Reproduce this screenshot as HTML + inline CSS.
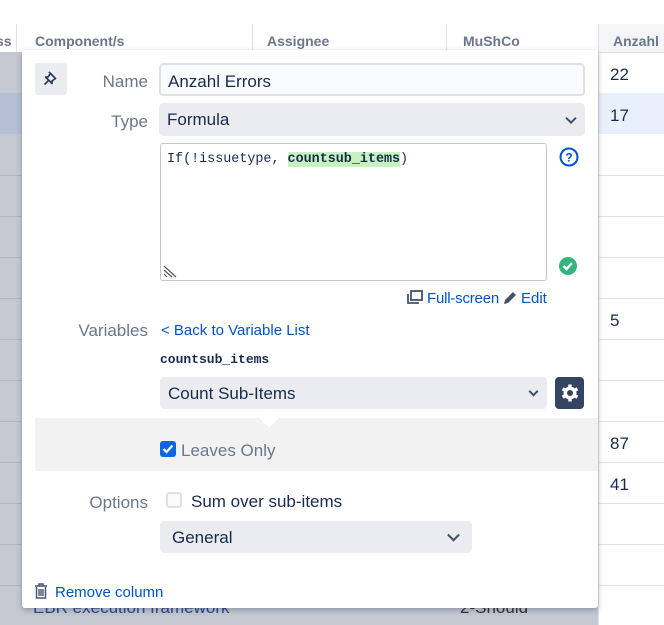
<!DOCTYPE html>
<html><head><style>
*{box-sizing:border-box;margin:0;padding:0}
body{width:664px;height:625px;overflow:hidden;background:#fff;font-family:"Liberation Sans",sans-serif;position:relative}
.a{position:absolute}
.hdr{font-weight:bold;color:#6b778c;font-size:14px;top:33px}
.lbl{color:#6b778c;font-size:17px;text-align:right;width:126px;left:22px}
.sel{background:#ebecf0;border-radius:4px;color:#172b4d;font-size:17px;padding-left:8px;padding-top:1px;display:flex;align-items:center}
.chev{position:absolute;right:10px;top:50%;width:8px;height:8px;border-right:2.5px solid #42526e;border-bottom:2.5px solid #42526e;transform:translateY(-70%) rotate(45deg)}
.link{color:#0052cc;font-size:15px}
.rowline{height:1px;background:#dfe1e6}
</style></head><body>
<div class="a" style="left:0;top:24px;width:598px;height:601px;background:#c5c8d0"></div>
<div class="a" style="left:0;top:24px;width:598px;height:28px;background:#fff"></div>
<div class="a" style="left:0;top:93px;width:22px;height:41px;background:#b4bfd4"></div>
<div class="a" style="left:598px;top:24px;width:66px;height:28px;background:#f4f5f7"></div>
<div class="a" style="left:598px;top:93px;width:66px;height:41px;background:#e9f0fb"></div>
<div class="a" style="left:598px;top:24px;width:1px;height:601px;background:#dfe1e6"></div>
<div class="a rowline" style="left:598px;top:52px;width:66px"></div>
<div class="a rowline" style="left:598px;top:175px;width:66px"></div>
<div class="a rowline" style="left:598px;top:216px;width:66px"></div>
<div class="a rowline" style="left:598px;top:257px;width:66px"></div>
<div class="a rowline" style="left:598px;top:298px;width:66px"></div>
<div class="a rowline" style="left:598px;top:339px;width:66px"></div>
<div class="a rowline" style="left:598px;top:380px;width:66px"></div>
<div class="a rowline" style="left:598px;top:421px;width:66px"></div>
<div class="a rowline" style="left:598px;top:462px;width:66px"></div>
<div class="a rowline" style="left:598px;top:503px;width:66px"></div>
<div class="a rowline" style="left:598px;top:544px;width:66px"></div>
<div class="a rowline" style="left:598px;top:585px;width:66px"></div>
<div class="a" style="left:0;top:175px;width:22px;height:1px;background:#b3b6bf"></div>
<div class="a" style="left:0;top:216px;width:22px;height:1px;background:#b3b6bf"></div>
<div class="a" style="left:0;top:257px;width:22px;height:1px;background:#b3b6bf"></div>
<div class="a" style="left:0;top:298px;width:22px;height:1px;background:#b3b6bf"></div>
<div class="a" style="left:0;top:339px;width:22px;height:1px;background:#b3b6bf"></div>
<div class="a" style="left:0;top:380px;width:22px;height:1px;background:#b3b6bf"></div>
<div class="a" style="left:0;top:421px;width:22px;height:1px;background:#b3b6bf"></div>
<div class="a" style="left:0;top:462px;width:22px;height:1px;background:#b3b6bf"></div>
<div class="a" style="left:0;top:503px;width:22px;height:1px;background:#b3b6bf"></div>
<div class="a" style="left:0;top:544px;width:22px;height:1px;background:#b3b6bf"></div>
<div class="a" style="left:0;top:585px;width:22px;height:1px;background:#b3b6bf"></div>
<div class="a" style="left:16px;top:24px;width:1px;height:28px;background:#dfe1e6"></div>
<div class="a" style="left:252px;top:24px;width:1px;height:28px;background:#dfe1e6"></div>
<div class="a" style="left:446px;top:24px;width:1px;height:28px;background:#dfe1e6"></div>
<div class="a hdr" style="left:-4px">ss</div>
<div class="a hdr" style="left:35px">Component/s</div>
<div class="a hdr" style="left:267px">Assignee</div>
<div class="a hdr" style="left:463px">MuShCo</div>
<div class="a hdr" style="left:613px">Anzahl</div>
<div class="a" style="left:610px;top:65px;font-size:17px;color:#172b4d">22</div>
<div class="a" style="left:610px;top:106px;font-size:17px;color:#172b4d">17</div>
<div class="a" style="left:610px;top:311px;font-size:17px;color:#172b4d">5</div>
<div class="a" style="left:610px;top:434px;font-size:17px;color:#172b4d">87</div>
<div class="a" style="left:610px;top:475px;font-size:17px;color:#172b4d">41</div>
<div class="a" style="left:33px;top:598px;font-size:17px;color:#2d4a8a">EBR execution framework</div>
<div class="a" style="left:460px;top:598px;font-size:17px;color:#333">2-Should</div>

<div class="a" style="left:22px;top:50px;width:576px;height:558px;background:#fff;border-radius:3px;box-shadow:0 2px 6px rgba(9,30,66,.3)"></div>
<div class="a" style="left:35px;top:63px;width:32px;height:32px;background:#ebecf0;border-radius:3px"></div>
<svg class="a" style="left:42px;top:69px" width="18" height="18" viewBox="0 0 18 18"><path d="M7 3 L14 10 M8.5 4.5 L6 8 L3.5 8 L10 14.5 L10 12 L13.5 9.5 M6.5 11.5 L2.5 15.5" fill="none" stroke="#253858" stroke-width="1.6" stroke-linejoin="round"/></svg>
<div class="a lbl" style="top:72px">Name</div>
<div class="a" style="left:159px;top:63px;width:426px;height:33px;border:2px solid #dfe1e6;border-radius:4px;background:#fafbfc;font-size:17px;color:#172b4d;padding:7px 0 0 7px">Anzahl Errors</div>
<div class="a lbl" style="top:112px">Type</div>
<div class="a sel" style="left:159px;top:103px;width:426px;height:33px">Formula<span class="chev"></span></div>
<div class="a" style="left:160px;top:143px;width:387px;height:138px;border:1px solid #c1c7d0;border-radius:3px;background:#fff"></div>
<div class="a" style="left:167px;top:152px;font-family:'Liberation Mono',monospace;font-size:13.4px;color:#172b4d">If(!issuetype, <b style="background:#c8f0c0">countsub_items</b>)</div>
<svg class="a" style="left:162px;top:262px" width="16" height="16"><path d="M2 4 L14 15 M2 8 L10 15 M2 12 L5 15" stroke="#555" stroke-width="1.2"/></svg>
<svg class="a" style="left:559px;top:147px" width="20" height="20"><circle cx="10" cy="10" r="8.5" fill="none" stroke="#0052cc" stroke-width="2"/><text x="10" y="14.5" font-size="12" font-weight="bold" text-anchor="middle" fill="#0052cc" font-family="Liberation Sans">?</text></svg>
<svg class="a" style="left:558px;top:256px" width="20" height="20"><circle cx="10" cy="10" r="9" fill="#36b37e"/><path d="M5.5 10 L8.5 13 L14 7" fill="none" stroke="#fff" stroke-width="2.4"/></svg>
<svg class="a" style="left:407px;top:290px" width="16" height="14"><rect x="4" y="1" width="11" height="9" fill="none" stroke="#42526e" stroke-width="1.8"/><path d="M1 4 V13 H12" fill="none" stroke="#42526e" stroke-width="1.8"/></svg>
<div class="a link" style="left:427px;top:290px;letter-spacing:-0.2px">Full-screen</div>
<svg class="a" style="left:502px;top:290px" width="16" height="16"><path d="M2 14 L3 10 L11 2 L14 5 L6 13 Z" fill="#42526e"/></svg>
<div class="a link" style="left:521px;top:290px">Edit</div>
<div class="a lbl" style="top:321px">Variables</div>
<div class="a link" style="left:161px;top:322px;font-size:15px">&lt; Back to Variable List</div>
<div class="a" style="left:160px;top:352px;font-family:'Liberation Mono',monospace;font-weight:bold;font-size:13px;color:#172b4d">countsub_items</div>
<div class="a sel" style="left:160px;top:377px;width:387px;height:32px">Count Sub-Items<span class="chev" style="right:10px;width:7px;height:7px"></span></div>
<div class="a" style="left:555px;top:377px;width:29px;height:32px;background:#344563;border-radius:4px"></div>
<svg class="a" style="left:560px;top:383px" width="20" height="20" viewBox="0 0 20 20"><g fill="#fff"><circle cx="10" cy="10" r="6.5"/><rect x="8.3" y="1.5" width="3.4" height="17"/><rect x="8.3" y="1.5" width="3.4" height="17" transform="rotate(60 10 10)"/><rect x="8.3" y="1.5" width="3.4" height="17" transform="rotate(120 10 10)"/></g><circle cx="10" cy="10" r="3" fill="#344563"/></svg>
<div class="a" style="left:35px;top:418px;width:563px;height:53px;background:#f2f2f2"></div>
<div class="a" style="left:262px;top:411px;width:14px;height:14px;background:#fff;transform:rotate(45deg)"></div>
<div class="a" style="left:160px;top:441px;width:16px;height:16px;background:#0c66e4;border-radius:3px"></div>
<svg class="a" style="left:160px;top:441px" width="16" height="16"><path d="M3.5 8 L6.5 11 L12.5 4.5" fill="none" stroke="#fff" stroke-width="2.2"/></svg>
<div class="a" style="left:181px;top:441px;font-size:17px;color:#6b778c">Leaves Only</div>
<div class="a lbl" style="top:493px">Options</div>
<div class="a" style="left:166px;top:492px;width:16px;height:16px;border:2px solid #dfe1e6;border-radius:3px;background:#fafbfc"></div>
<div class="a" style="left:191px;top:492px;font-size:17px;color:#172b4d">Sum over sub-items</div>
<div class="a sel" style="left:160px;top:521px;width:312px;height:32px;padding-left:12px">General<span class="chev" style="right:14px;width:9px;height:9px"></span></div>
<svg class="a" style="left:34px;top:583px" width="14" height="16"><path d="M1 3 H13 M5 3 V1 H9 V3 M2.5 4 V15 H11.5 V4 M5 6 V13 M7 6 V13 M9 6 V13" fill="none" stroke="#42526e" stroke-width="1.4"/></svg>
<div class="a link" style="left:55px;top:584px">Remove column</div>
</body></html>
